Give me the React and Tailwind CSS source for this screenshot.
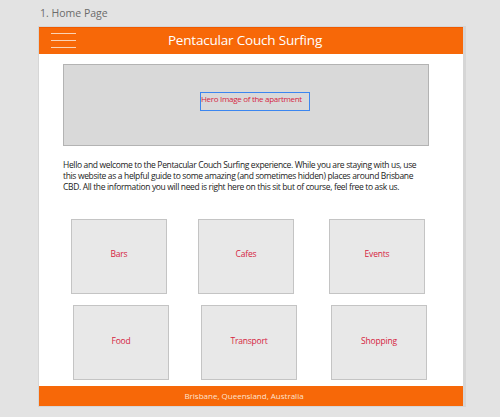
const rowOne = [
  { label: 'Bars', ml: 'ml-[32px]' },
  { label: 'Cafes', ml: 'ml-[31px]' },
  { label: 'Events', ml: 'ml-[35px]' },
];

const rowTwo = [
  { label: 'Food', ml: 'ml-[34px]' },
  { label: 'Transport', ml: 'ml-[32px]' },
  { label: 'Shopping', ml: 'ml-[34px]' },
];

const Tile = ({ label, ml, pb }) => (
  <div className={`${ml} ${pb} flex h-[75px] w-[96px] items-center justify-center border-[1.5px] border-[#c4c4c4] bg-[#e8e8e8] text-[8.5px] tracking-[-0.2px] text-[#d6243f]`}>
    {label}
  </div>
);

export default function App() {
  return (
    <div className="h-[417px] w-[500px] overflow-hidden bg-[#e3e3e3] font-['Open_Sans',sans-serif]">
      <p className="pl-[40px] pt-[5px] text-[10.5px] leading-[16px] text-[#6b6b6b]">1. Home Page</p>
      <div className="ml-[38px] mt-[5px] w-[428px] border-l border-r-[3px] border-t border-b border-[#d6d6d6] bg-white">
        <header className="relative flex h-[27px] items-center justify-center border-t border-[#f05a00] bg-[#f76808]">
          <div className="absolute left-[12px] top-[5px] flex w-[25px] flex-col gap-[6px]">
            <span className="h-px w-full bg-[#fbd3b5]" />
            <span className="h-px w-full bg-[#fbd3b5]" />
            <span className="h-px w-full bg-[#fbd3b5]" />
          </div>
          <h1 className="pr-[12px] text-[13.5px] leading-none tracking-[-0.2px] text-white">Pentacular Couch Surfing</h1>
        </header>

        <div className="ml-[24px] mt-[10px] h-[82px] w-[366px] border border-[#b3b3b3] bg-[#d9d9d9] pt-[27px]">
          <div className="ml-[136px] h-[19px] w-[110px] whitespace-nowrap border-[1.5px] border-[#3b86f0] text-[8px] leading-[11px] tracking-[-0.3px] text-[#d6243f]">
            Hero Image of the apartment
          </div>
        </div>

        <p className="ml-[24px] mt-[13px] w-[366px] text-[8.5px] leading-[11px] tracking-[-0.35px] text-[#222]">
          Hello and welcome to the Pentacular Couch Surfing experience. While you are staying with us, use this website as a helpful guide to some amazing (and sometimes hidden) places around Brisbane CBD. All the information you will need is right here on this sit but of course, feel free to ask us.
        </p>

        <div className="mt-[27px] flex">
          {rowOne.map((t) => (
            <Tile key={t.label} {...t} pb="pb-[4px]" />
          ))}
        </div>
        <div className="mt-[11px] flex">
          {rowTwo.map((t) => (
            <Tile key={t.label} {...t} pb="pb-[2px]" />
          ))}
        </div>

        <footer className="mt-[6px] flex h-[20px] items-center justify-center bg-[#f76808] pr-[14px] text-[8px] text-[#fde3d0]">
          Brisbane, Queensland, Australia
        </footer>
      </div>
    </div>
  );
}
